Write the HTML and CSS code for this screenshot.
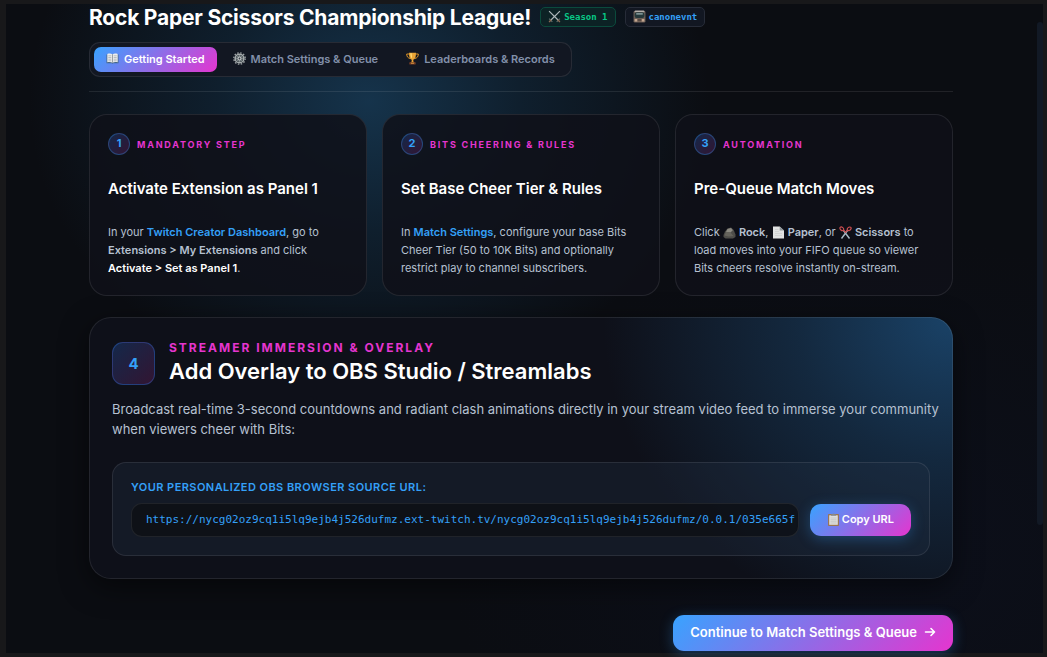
FILE: index.html
```html
<!DOCTYPE html>
<html lang="en">
<head>
<meta charset="utf-8">
<title>Rock Paper Scissors Championship League!</title>
<link rel="stylesheet" href="styles.css">
</head>
<body>
<div class="app">
  <div class="content">
    <header class="header">
      <div class="title-row">
        <h1 class="title">Rock Paper Scissors Championship League!</h1>
        <span class="badge badge-season">
          <svg class="icon" viewBox="0 0 12 12" aria-hidden="true"><path d="M1 1l8.500 8.500M11 1l-8.500 8.500" stroke="#aeb8bb" stroke-width="1.100"/><path d="M1 8l3 3M11 8l-3 3" stroke="#65706f" stroke-width="1"/><path d="M3 9l-2 2M9 9l2 2" stroke="#8b6a55" stroke-width="1.300"/></svg>
          Season 1
        </span>
        <span class="badge badge-channel">
          <svg class="icon" viewBox="0 0 12 12" aria-hidden="true"><rect x=".5" y="1" width="11" height="10.500" rx="1.200" fill="#6c5f57"/><rect x="1.500" y=".5" width="9" height="1.500" rx=".7" fill="#b5b0aa"/><rect x="1.500" y="2" width="9" height="5.300" rx="1.800" fill="#26393b"/><path d="M3 3h6v1.200H3z" fill="#9ab0b0"/><path d="M1.500 8.300h9v2.400h-9z" fill="#c4a68f"/><path d="M4 8.300h4v2.400H4z" fill="#584a43"/></svg>
          canonevnt
        </span>
      </div>
      <nav class="tabs" aria-label="Sections">
        <button class="tab tab-active" type="button">
          <svg class="icon" viewBox="0 0 13 12" aria-hidden="true"><path d="M.5 2h12v8.700H7.300l-.8.600-.8-.6H.5z" fill="#46678a"/><path d="M1.300 1.500c2-.6 4-.5 5.200.4v8.300c-1.500-.8-3.300-.8-5.200-.4zM11.700 1.500c-2-.6-4-.5-5.200.4v8.300c1.500-.8 3.300-.8 5.200-.4z" fill="#eceeed"/><path d="M2.300 3.300h3M2.300 5h3M2.300 6.700h3M2.300 8.300h3M7.700 3.300h3M7.700 5h3M7.700 6.700h3M7.700 8.300h3" stroke="#a2a8ad" stroke-width=".7"/><path d="M6.500 1.900v8.300" stroke="#777f86" stroke-width=".7"/></svg>
          Getting Started
        </button>
        <button class="tab" type="button">
          <svg class="icon" viewBox="0 0 13 13" aria-hidden="true"><circle cx="6.500" cy="6.500" r="5.700" fill="none" stroke="#9ba1a3" stroke-width="1.400" stroke-dasharray="1.500 1.484"/><circle cx="6.500" cy="6.500" r="4.300" fill="none" stroke="#a4aaab" stroke-width="1.600"/><circle cx="6.500" cy="6.500" r="3.500" fill="#5f686c"/><path d="M6.500 3v7M3 6.500h7M4 4l5 5M9 4L4 9" stroke="#8c9496" stroke-width=".6"/><circle cx="6.500" cy="6.500" r="1.900" fill="#c2c5c5"/><circle cx="6.500" cy="6.500" r=".9" fill="#343b43"/></svg>
          Match Settings &amp; Queue
        </button>
        <button class="tab" type="button">
          <svg class="icon" viewBox="0 0 13 13" aria-hidden="true"><path d="M3.500 2H.7c0 2.800 1.300 4 3.500 4.500M9.500 2h2.800c0 2.800-1.300 4-3.500 4.500" fill="none" stroke="#dc9427" stroke-width="1"/><path d="M3 .7h7c0 4-.7 6.200-2.700 7v1.800l1.700 1.200H4l1.700-1.200V7.700C3.700 6.900 3 4.700 3 .7z" fill="#e9a536"/><path d="M4.300 1.300h1.400l.4 5.200C4.800 5.500 4.400 4 4.300 1.300z" fill="#ffdc77"/><rect x="3.300" y="10.300" width="6.400" height="2.200" rx=".4" fill="#7b3f25"/><path d="M5 11.300h3" stroke="#e0a343" stroke-width=".8"/></svg>
          Leaderboards &amp; Records
        </button>
      </nav>
    </header>

    <main class="main">
      <section class="steps">
        <article class="card">
          <div class="card-head"><span class="num">1</span><span class="eyebrow">Mandatory Step</span></div>
          <h3 class="card-title">Activate Extension as Panel 1</h3>
          <p class="card-text">In your <a class="link" href="#dashboard">Twitch Creator Dashboard</a>, go to <b>Extensions &gt; My Extensions</b> and click <strong class="bright">Activate &gt; Set as Panel 1</strong>.</p>
        </article>
        <article class="card">
          <div class="card-head"><span class="num">2</span><span class="eyebrow">Bits Cheering &amp; Rules</span></div>
          <h3 class="card-title">Set Base Cheer Tier &amp; Rules</h3>
          <p class="card-text">In <a class="link" href="#settings">Match Settings</a>, configure your base Bits Cheer Tier (50 to 10K Bits) and optionally restrict play to channel subscribers.</p>
        </article>
        <article class="card">
          <div class="card-head"><span class="num">3</span><span class="eyebrow">Automation</span></div>
          <h3 class="card-title">Pre-Queue Match Moves</h3>
          <p class="card-text">Click <svg class="icon icon-inline" viewBox="0 0 13 12" aria-hidden="true"><path d="M.5 8.500L2 5l2.500-3L8 1l2.700 2.500L12.500 8v2.500L10 12H2.500L.5 10.500z" fill="#4e4d49"/><path d="M4.500 2.500L8 1.500l1.800 2.300L7.500 6 3 5.500z" fill="#8b8981"/><path d="M3 5.500L7.500 6l3 3.500-5 .5-4-1z" fill="#65635c"/></svg> <b>Rock</b>, <svg class="icon icon-inline" viewBox="0 0 13 12" aria-hidden="true"><path d="M1 0h6.700l4.300 4v8H1z" fill="#e1e2e2"/><path d="M7.700 0L12 4H7.700z" fill="#8f9598"/><path d="M3 3h3.500M3 5h4M3 7h7M3 9h7" stroke="#c6c9ca" stroke-width=".6"/></svg> <b>Paper</b>, or <svg class="icon icon-inline" viewBox="0 0 13 12" aria-hidden="true"><path d="M4.500 4L10.500 12M8.500 4L2.500 12" stroke="#a8bac6" stroke-width="1.400"/><ellipse cx="2.800" cy="2.300" rx="1.500" ry="2.100" transform="rotate(-50 2.800 2.300)" fill="none" stroke="#cb4e51" stroke-width="1.200"/><ellipse cx="10.200" cy="2.300" rx="1.500" ry="2.100" transform="rotate(50 10.200 2.300)" fill="none" stroke="#cb4e51" stroke-width="1.200"/><path d="M4.200 3.400l2.300 2.500 2.300-2.500" fill="none" stroke="#cb4e51" stroke-width="1.200"/></svg> <b>Scissors</b> to load moves into your FIFO queue so viewer Bits cheers resolve instantly on-stream.</p>
        </article>
      </section>

      <section class="feature">
        <div class="feature-head">
          <span class="num-large">4</span>
          <div class="feature-heading">
            <span class="feature-eyebrow">Streamer Immersion &amp; Overlay</span>
            <h2 class="feature-title">Add Overlay to OBS Studio / Streamlabs</h2>
          </div>
        </div>
        <p class="feature-text">Broadcast real-time 3-second countdowns and radiant clash animations directly in your stream video feed to immerse your community when viewers cheer with Bits:</p>
        <div class="url-box">
          <label class="url-label" for="source-url">Your Personalized OBS Browser Source URL:</label>
          <div class="url-row">
            <input class="url-input" id="source-url" type="text" readonly value="https://nycg02oz9cq1i5lq9ejb4j526dufmz.ext-twitch.tv/nycg02oz9cq1i5lq9ejb4j526dufmz/0.0.1/035e665f">
            <button class="button button-copy" type="button">
              <svg class="icon" viewBox="0 0 12 13" aria-hidden="true"><rect x=".5" y="1" width="11" height="12" rx=".8" fill="#9b7653"/><path d="M1.700 2.300h8.600v9.500H1.700z" fill="#dedfdd"/><path d="M3 5h6M3 6.700h6M3 8.300h6M3 10h6" stroke="#bbbdbb" stroke-width=".6"/><path d="M3.500 2.800V1.500h1.300C5 .2 7 .2 7.200 1.500h1.300v1.300z" fill="#858b90"/></svg>
              Copy URL
            </button>
          </div>
        </div>
      </section>

      <div class="actions">
        <button class="button button-next" type="button">
          Continue to Match Settings &amp; Queue
          <svg class="arrow" viewBox="0 0 12 12" aria-hidden="true"><path d="M1.500 6h9M7 2.500L10.500 6 7 9.500" fill="none" stroke="currentColor" stroke-width="1.600" stroke-linecap="round" stroke-linejoin="round"/></svg>
        </button>
      </div>
    </main>
  </div>
  <div class="scrollbar" aria-hidden="true"><div class="scroll-thumb"></div></div>
</div>
</body>
</html>
```
FILE: styles.css
```css
:root {
  --blue: #34a0f8;
  --pink: #e535cf;
  --line: rgba(255, 255, 255, 0.09);
  --gradient: linear-gradient(135deg, #38a3ff, #e535cf);
}

* {
  box-sizing: border-box;
}

body {
  margin: 0;
  min-height: 100vh;
  display: flex;
  padding: 4px 4px 4px 6px;
  background: #18181a;
  color: #fff;
  font-family: Inter, "Liberation Sans", sans-serif;
}

h1, h2, h3, p {
  margin: 0;
}

button, input {
  font-family: inherit;
}

.app {
  flex: 1;
  display: flex;
  background:
    radial-gradient(ellipse 340px 290px at 35% 15%, rgba(34, 98, 145, 0.45), rgba(24, 72, 108, 0.3) 45%, transparent),
    radial-gradient(ellipse 440px 320px at 85% 85%, rgba(14, 20, 46, 0.3), transparent),
    #0b0d12;
}

.content {
  flex: 1;
  min-width: 0;
  padding: 0 84px 2px 83px;
}

.header {
  display: flex;
  flex-direction: column;
  align-items: flex-start;
  gap: 10px;
  padding-bottom: 14px;
  border-bottom: 1px solid var(--line);
}

.title-row {
  display: flex;
  align-items: center;
  gap: 9px;
}

.title {
  font-size: 21px;
  line-height: 28px;
  font-weight: 700;
  letter-spacing: -0.01em;
}

.icon {
  flex: none;
  width: 13px;
  height: 13px;
}

.badge {
  display: flex;
  align-items: center;
  gap: 3px;
  height: 20px;
  margin-bottom: 3px;
  padding: 0 7px;
  border: 1px solid;
  border-radius: 5px;
  font: 700 9px "DejaVu Sans Mono", monospace;
}

.badge-season {
  color: #08c886;
  background: #0c2225;
  border-color: #0b4a3c;
}

.badge-channel {
  color: var(--blue);
  background: #121722;
  border-color: #272c38;
}

.tabs {
  display: flex;
  gap: 4px;
  padding: 4px;
  border: 1px solid var(--line);
  border-radius: 11px;
  background: #121722;
}

.tab {
  display: flex;
  align-items: center;
  gap: 5px;
  height: 25px;
  padding: 0 12px 2px;
  border: 0;
  border-radius: 7px;
  background: none;
  color: #8290aa;
  font-size: 11px;
  font-weight: 600;
}

.tab-active {
  background: var(--gradient);
  color: #fff;
}

.main {
  padding-top: 22px;
}

.steps {
  display: grid;
  grid-template-columns: repeat(3, 1fr);
  gap: 15px;
}

.card {
  display: flex;
  flex-direction: column;
  gap: 24px;
  padding: 18px;
  border: 1px solid var(--line);
  border-radius: 18px;
  background: rgba(15, 17, 25, 0.85);
}

.card-head {
  display: flex;
  align-items: center;
  gap: 7px;
}

.num {
  display: grid;
  place-items: center;
  width: 22px;
  height: 22px;
  padding-bottom: 3px;
  border: 1px solid rgba(56, 160, 255, 0.3);
  border-radius: 50%;
  background: linear-gradient(135deg, #14284a, #321532);
  color: var(--blue);
  font-size: 11px;
  font-weight: 700;
}

.eyebrow, .feature-eyebrow {
  color: var(--pink);
  font-weight: 700;
  text-transform: uppercase;
}

.eyebrow {
  font-size: 9px;
  letter-spacing: 0.2em;
}

.card-title {
  font-size: 15px;
  line-height: 20px;
  font-weight: 600;
}

.card-text {
  color: #b6c1d1;
  font-size: 11px;
  line-height: 18px;
}

.card-text b {
  font-weight: 600;
}

.link {
  color: var(--blue);
  font-weight: 600;
  text-decoration: none;
}

.bright {
  color: #fff;
  font-weight: 600;
}

.icon-inline {
  vertical-align: -3px;
}

.feature {
  margin-top: 21px;
  padding: 22px;
  border: 1px solid var(--line);
  border-radius: 22px;
  background:
    radial-gradient(ellipse 350px 320px at 100% 0%, rgba(32, 93, 145, 0.65), rgba(26, 70, 108, 0.45) 45%, transparent) border-box,
    #0e1019;
  box-shadow: 0 8px 28px rgba(0, 0, 0, 0.5);
}

.feature-head {
  display: flex;
  align-items: center;
  gap: 14px;
}

.num-large {
  display: grid;
  place-items: center;
  width: 43px;
  height: 43px;
  border: 1px solid rgba(56, 130, 255, 0.3);
  border-radius: 11px;
  background: linear-gradient(135deg, #14284a, #321532);
  color: var(--blue);
  font-size: 15px;
  font-weight: 700;
}

.feature-heading {
  display: flex;
  flex-direction: column;
}

.feature-eyebrow {
  font-size: 12px;
  line-height: 16px;
  letter-spacing: 2px;
}

.feature-title {
  font-size: 22px;
  line-height: 30px;
  font-weight: 600;
}

.feature-text {
  margin: 13px -16px 0 0;
  color: #b6c1d1;
  font-size: 13px;
  line-height: 20px;
}

.url-box {
  margin-top: 23px;
  padding: 18px;
  border: 1px solid var(--line);
  border-radius: 14px;
  background: rgba(35, 50, 70, 0.3);
}

.url-label {
  display: block;
  color: var(--blue);
  font-size: 11px;
  line-height: 13px;
  font-weight: 600;
  letter-spacing: 0.04em;
  text-transform: uppercase;
}

.url-row {
  display: flex;
  align-items: center;
  gap: 11px;
  margin-top: 9px;
}

.url-input {
  flex: 1;
  min-width: 0;
  height: 34px;
  padding: 0 1px 2px 14px;
  border: 1px solid rgba(255, 255, 255, 0.08);
  border-radius: 11px;
  background: rgba(10, 12, 16, 0.65);
  color: var(--blue);
  font: 11px "DejaVu Sans Mono", monospace;
}

.button {
  display: flex;
  align-items: center;
  justify-content: center;
  border: 0;
  border-radius: 11px;
  background: var(--gradient);
  color: #fff;
  font-weight: 600;
  box-shadow: 0 3px 14px rgba(56, 160, 255, 0.3);
}

.button-copy {
  gap: 2px;
  height: 32px;
  padding: 0 17px 2px;
  font-size: 11px;
}

.actions {
  display: flex;
  justify-content: flex-end;
  margin-top: 36px;
}

.button-next {
  gap: 7px;
  height: 36px;
  padding: 0 17px 2px;
  font-size: 13px;
}

.arrow {
  width: 12px;
  height: 12px;
}

.scrollbar {
  display: flex;
  width: 6px;
  padding: 18px 0 128px;
}

.scroll-thumb {
  flex: 1;
  border-radius: 3px;
  background: #121925;
}
```
